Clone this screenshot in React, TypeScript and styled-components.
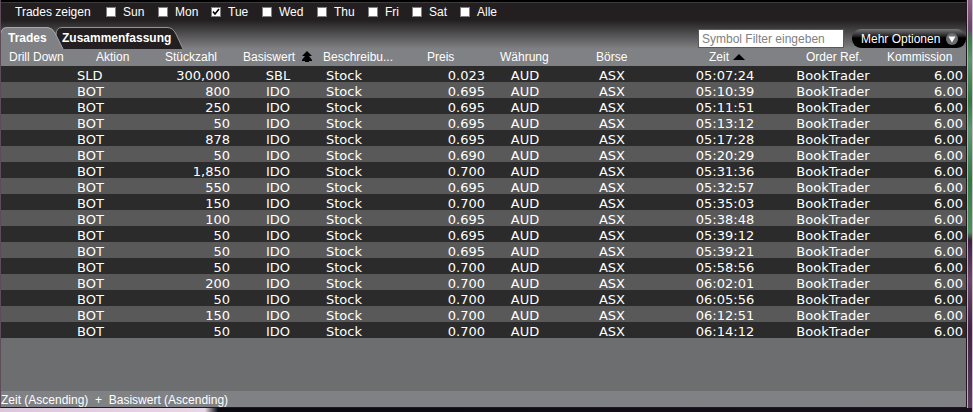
import React, { useState } from "react";
import styled, { createGlobalStyle } from "styled-components";

const GlobalStyle = createGlobalStyle`
  * { box-sizing: border-box; }
  html, body, #root { height: 100%; }
  body {
    margin: 0;
    overflow: hidden;
    color: #fff;
    background: #4a2b4c;
    font: 12px/16px "Liberation Sans", Arial, sans-serif;
  }
`;

const Desktop = styled.div`
  display: flex;
  flex-direction: column;
  height: 100%;
  border-right: 1px solid #c9bccb;
  background: linear-gradient(#8e6088 0, #67446a 28px, #3d7f4b 40px, #5d9470 60px, #2f7a40 100px, #5c9670 130px, #2f7a40 180px, #4b8f5c 232px, #3c2140 240px, #69476c 280px, #422444 330px, #5d3d61 100%);
`;

const Window = styled.main`
  display: flex;
  flex: 1;
  flex-direction: column;
  margin-right: 5px;
  border: 1px solid #24161f;
  border-width: 0 1px 1px;
  border-left-color: #5e4c59;
  outline: 1px solid #bfa9c2;
  background: #6d6e70;
`;

const WindowEdge = styled.div`
  height: 4px;
  background: linear-gradient(90deg, #dcc6dc 0, #e7d6e5 205px, #0a0810 218px, #17101c 100%);
`;

const Head = styled.header`
  border-top: 2px solid #000;
  background: linear-gradient(#58595b 0, #231f20 1px, #231f20 18px, #808184 47px);
`;

const DayBar = styled.fieldset`
  display: flex;
  align-items: center;
  height: 20px;
  margin: 0;
  padding: 0 0 0 14px;
  border: 0;
`;

const Caption = styled.span`
  width: 91px;
`;

const DayLabel = styled.label<{ $width: number }>`
  display: flex;
  align-items: center;
  gap: 7px;
  width: ${(p) => p.$width}px;
`;

const Tick = styled.input`
  appearance: none;
  width: 10px;
  height: 10px;
  margin: 0;
  border: 1px solid #808080;
  background: #fff;
  &:checked {
    background: #fff url("data:image/svg+xml,%3Csvg xmlns='http://www.w3.org/2000/svg' viewBox='0 0 8 8'%3E%3Cpath d='M1 3.5 3 6 7 1' fill='none' stroke='black' stroke-width='1.6'/%3E%3C/svg%3E") center / 8px 8px no-repeat;
  }
`;

const TabBar = styled.div`
  display: flex;
  align-items: flex-end;
  justify-content: space-between;
  height: 27px;
`;

const Tabs = styled.nav`
  display: flex;
`;

const Tab = styled.button<{ $selected: boolean; $width: number }>`
  position: relative;
  z-index: ${(p) => (p.$selected ? 1 : 0)};
  width: ${(p) => p.$width}px;
  height: 22px;
  margin-right: -9px;
  padding: 0 0 1px 7px;
  border: 0;
  background: none;
  color: #fff;
  font: bold 12px/16px "Liberation Sans", Arial, sans-serif;
  text-align: left;
`;

const TabShape = styled.svg`
  position: absolute;
  z-index: -1;
  inset: 0;
  width: 100%;
  height: 100%;
`;

const Tools = styled.div`
  display: flex;
  gap: 8px;
  align-items: center;
  padding-bottom: 1px;
`;

const Filter = styled.input`
  width: 146px;
  height: 19px;
  padding: 0 3px;
  border: 1px solid #58595b;
  background: #fff;
  color: #222;
  font: 12px/16px "Liberation Sans", Arial, sans-serif;
  &::placeholder { color: #808184; opacity: 1; }
`;

const MoreButton = styled.button`
  display: flex;
  align-items: center;
  justify-content: space-between;
  width: 114px;
  height: 19px;
  padding: 0 8px 0 9px;
  border: 0;
  border-radius: 9px;
  background: linear-gradient(#77787b 0, #252525 7px, #000 9px, #000 100%);
  color: #fff;
  font: 12px/16px "Liberation Sans", Arial, sans-serif;
  white-space: nowrap;
`;

const Table = styled.table`
  width: 100%;
  table-layout: fixed;
  border-collapse: collapse;
`;

const HeadCell = styled.th<{ $indent: number }>`
  height: 17px;
  padding: 0 0 0 ${(p) => p.$indent}px;
  background: #808184;
  font-weight: normal;
  line-height: 17px;
  text-align: left;
  white-space: nowrap;
`;

const SortMark = styled.svg<{ $gap: number }>`
  margin-left: ${(p) => p.$gap}px;
  vertical-align: -1px;
`;

const Row = styled.tr`
  background: #2b2b2b;
  &:nth-child(even) { background: #595959; }
`;

const Cell = styled.td<{ $align: "left" | "right" | "center"; $inset: number }>`
  height: 16px;
  padding: 3px ${(p) => (p.$align === "right" ? p.$inset : 0)}px 0 ${(p) => (p.$align !== "right" ? p.$inset : 0)}px;
  font: 13px/13px Verdana, "DejaVu Sans", sans-serif;
  text-align: ${(p) => p.$align};
  white-space: nowrap;
`;

const Footer = styled.footer`
  height: 16px;
  margin-top: auto;
  background: #808184;
  line-height: 18px;
  white-space: pre;
`;

const days: [string, number][] = [
  ["Sun", 52], ["Mon", 53], ["Tue", 51], ["Wed", 55], ["Thu", 51], ["Fri", 44], ["Sat", 48], ["Alle", 50],
];

type Column = { title: string; width: number; indent: number; align: "left" | "right" | "center"; inset: number; sort?: "single" | "double" };

const columns: Column[] = [
  { title: "Drill Down", width: 74, indent: 8, align: "left", inset: 0 },
  { title: "Aktion", width: 76, indent: 21, align: "left", inset: 2 },
  { title: "Stückzahl", width: 81, indent: 14, align: "right", inset: 2 },
  { title: "Basiswert", width: 88, indent: 11, align: "center", inset: 4, sort: "double" },
  { title: "Beschreibu...", width: 82, indent: 3, align: "left", inset: 6 },
  { title: "Preis", width: 84, indent: 25, align: "right", inset: 1 },
  { title: "Währung", width: 78, indent: 14, align: "center", inset: 0 },
  { title: "Börse", width: 96, indent: 32, align: "center", inset: 0 },
  { title: "Zeit", width: 130, indent: 49, align: "center", inset: 0, sort: "single" },
  { title: "Order Ref.", width: 86, indent: 16, align: "center", inset: 0 },
  { title: "Kommission", width: 90, indent: 11, align: "right", inset: 3 },
];

const trades = [
  ["SLD", "300,000", "SBL", "0.023", "05:07:24"],
  ["BOT", "800", "IDO", "0.695", "05:10:39"],
  ["BOT", "250", "IDO", "0.695", "05:11:51"],
  ["BOT", "50", "IDO", "0.695", "05:13:12"],
  ["BOT", "878", "IDO", "0.695", "05:17:28"],
  ["BOT", "50", "IDO", "0.690", "05:20:29"],
  ["BOT", "1,850", "IDO", "0.700", "05:31:36"],
  ["BOT", "550", "IDO", "0.695", "05:32:57"],
  ["BOT", "150", "IDO", "0.700", "05:35:03"],
  ["BOT", "100", "IDO", "0.695", "05:38:48"],
  ["BOT", "50", "IDO", "0.695", "05:39:12"],
  ["BOT", "50", "IDO", "0.695", "05:39:21"],
  ["BOT", "50", "IDO", "0.700", "05:58:56"],
  ["BOT", "200", "IDO", "0.700", "06:02:01"],
  ["BOT", "50", "IDO", "0.700", "06:05:56"],
  ["BOT", "150", "IDO", "0.700", "06:12:51"],
  ["BOT", "50", "IDO", "0.700", "06:14:12"],
];

const rows = trades.map(([action, amount, symbol, price, time]) => [
  "", action, amount, symbol, "Stock", price, "AUD", "ASX", time, "BookTrader", "6.00",
]);

export default function App() {
  const [checked, setChecked] = useState<string[]>(["Tue"]);
  const [tab, setTab] = useState("Trades");
  const toggle = (day: string) =>
    setChecked((now) => (now.includes(day) ? now.filter((d) => d !== day) : [...now, day]));
  const tabFill = (name: string) => (tab === name ? "#808184" : "#231f20");

  return (
    <Desktop>
      <GlobalStyle />
      <Window>
        <Head>
          <DayBar aria-label="Trades zeigen">
            <Caption>Trades zeigen</Caption>
            {days.map(([day, width]) => (
              <DayLabel key={day} $width={width}>
                <Tick type="checkbox" checked={checked.includes(day)} onChange={() => toggle(day)} />
                {day}
              </DayLabel>
            ))}
          </DayBar>
          <TabBar>
            <Tabs>
              <Tab $width={63} $selected={tab === "Trades"} onClick={() => setTab("Trades")}>
                <TabShape viewBox="0 0 63 22" preserveAspectRatio="none" aria-hidden="true">
                  <path d="M0 22V6Q0 0 6 0H46Q51 0 54 6L62 22Z" fill={tabFill("Trades")} />
                  <path d="M0 6Q1 .5 6 .5H46Q51 .5 54 6L62 22" fill="none" stroke="#a7a9ac" />
                </TabShape>
                Trades
              </Tab>
              <Tab $width={129} $selected={tab === "Zusammenfassung"} onClick={() => setTab("Zusammenfassung")}>
                <TabShape viewBox="0 0 129 22" preserveAspectRatio="none" aria-hidden="true">
                  <path d="M1 22V7Q1 .5 7 .5H112Q118 .5 121 7L128 22Z" fill={tabFill("Zusammenfassung")} />
                  <path d="M1 8Q1 .5 7 .5H112Q118 .5 121 7L128 22" fill="none" stroke="#939598" />
                </TabShape>
                Zusammenfassung
              </Tab>
            </Tabs>
            <Tools>
              <Filter aria-label="Symbol Filter" placeholder="Symbol Filter eingeben" />
              <MoreButton>
                Mehr Optionen
                <svg width="12" height="12" viewBox="0 0 12 12" aria-hidden="true">
                  <circle cx="6" cy="6" r="6" fill="#6d6e70" />
                  <path d="M2.5 3.5H9.5L6 9.5Z" fill="#fff" />
                </svg>
              </MoreButton>
            </Tools>
          </TabBar>
        </Head>
        <Table>
          <colgroup>
            {columns.map((c) => <col key={c.title} width={`${(c.width / 965) * 100}%`} />)}
          </colgroup>
          <thead>
            <tr>
              {columns.map((c) => (
                <HeadCell key={c.title} $indent={c.indent} scope="col">
                  {c.title}
                  {c.sort === "single" && (
                    <SortMark $gap={4} width="12" height="9" viewBox="0 0 12 9" aria-hidden="true"><path d="M0 7L6 1L12 7Z" fill="#000" /></SortMark>
                  )}
                  {c.sort === "double" && (
                    <SortMark $gap={7} width="10" height="11" viewBox="0 0 10 11" aria-hidden="true"><path d="M0 5L5 0L10 5H7L10 9V10H7V11H3V10H0V9L3 5Z" fill="#000" /></SortMark>
                  )}
                </HeadCell>
              ))}
            </tr>
          </thead>
          <tbody>
            {rows.map((row, r) => (
              <Row key={r}>
                {row.map((value, i) => (
                  <Cell key={i} $align={columns[i].align} $inset={columns[i].inset}>{value}</Cell>
                ))}
              </Row>
            ))}
          </tbody>
        </Table>
        <Footer>{"Zeit (Ascending)  +  Basiswert (Ascending)"}</Footer>
      </Window>
      <WindowEdge />
    </Desktop>
  );
}
